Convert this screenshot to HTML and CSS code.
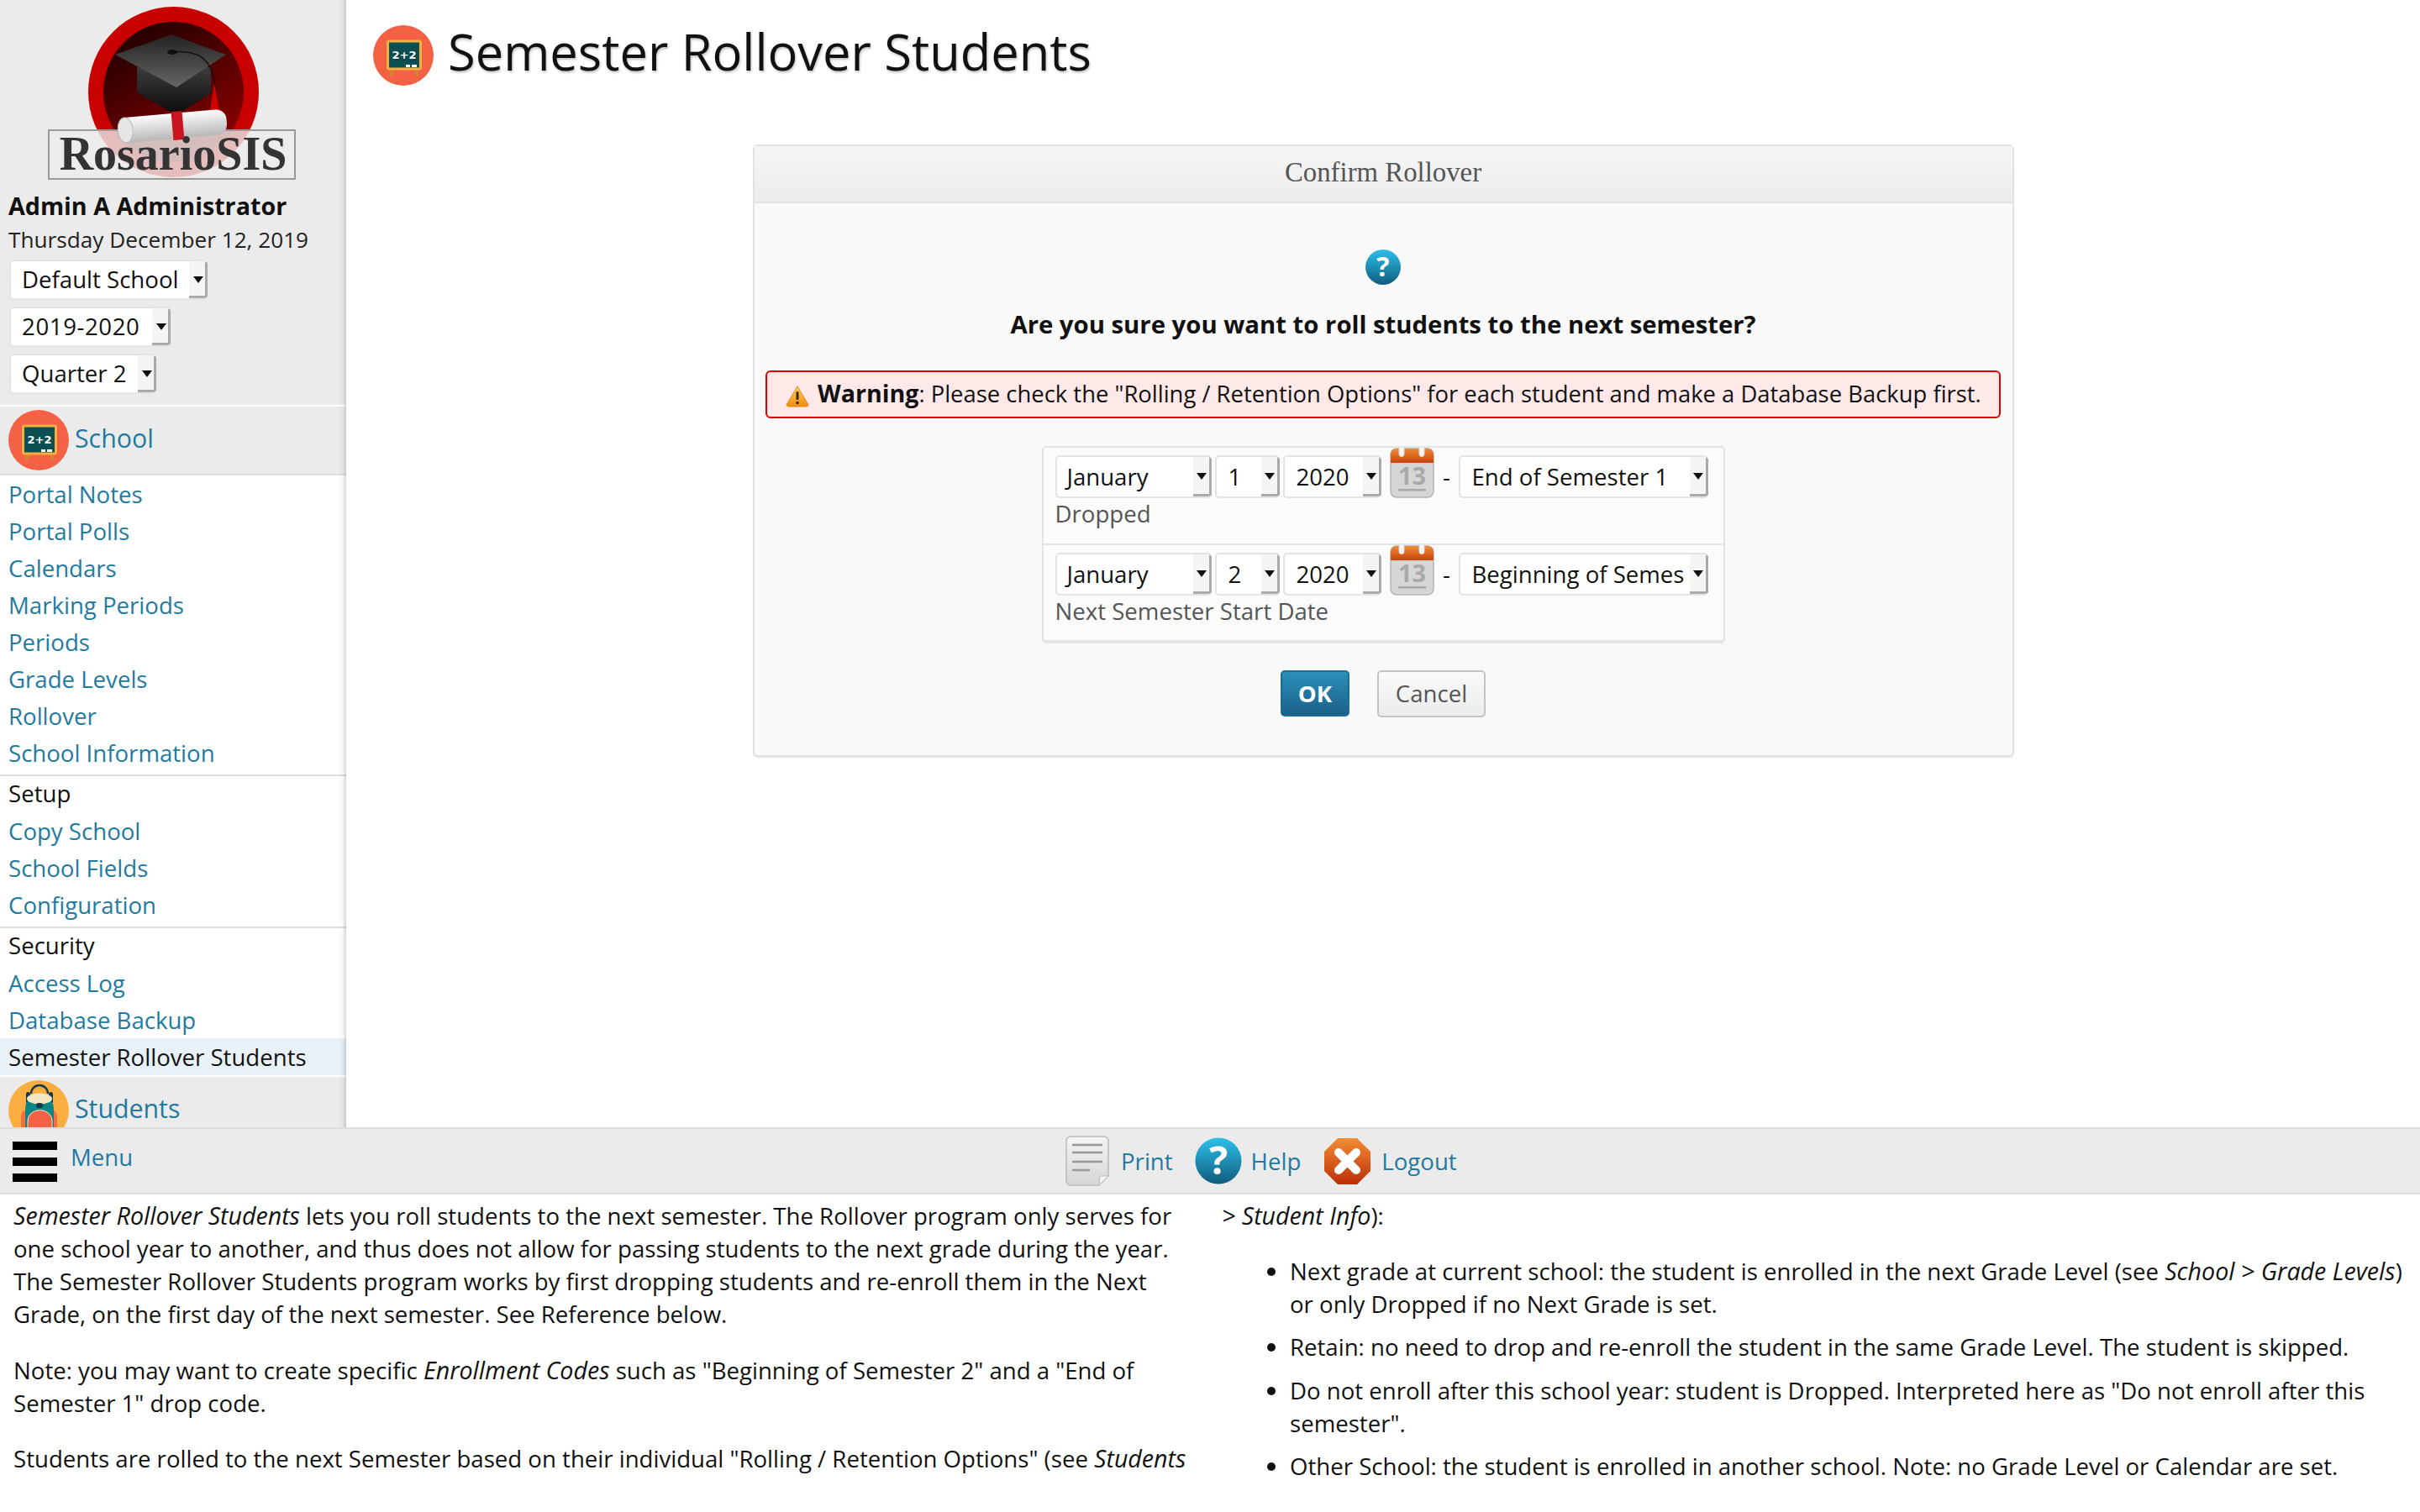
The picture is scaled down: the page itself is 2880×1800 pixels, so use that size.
FILE: index.html
```html
<!DOCTYPE html>
<html lang="en">
<head>
  <meta charset="UTF-8">
  <title>Semester Rollover Students</title>
  <link rel="stylesheet" href="styles.css">
</head>
<body>
  <svg class="defs" xmlns="http://www.w3.org/2000/svg">
    <defs>
      <linearGradient id="g-blue" x1="0" y1="0" x2="0" y2="1"><stop offset="0" stop-color="#2cc0ea"/><stop offset="1" stop-color="#105c7e"/></linearGradient>
      <linearGradient id="g-red" x1="0" y1="0" x2="0" y2="1"><stop offset="0" stop-color="#f28c33"/><stop offset="1" stop-color="#bd2f08"/></linearGradient>
      <linearGradient id="g-page" x1="0" y1="0" x2="0" y2="1"><stop offset="0" stop-color="#f5f5f5"/><stop offset="1" stop-color="#d6d6d6"/></linearGradient>
      <linearGradient id="g-warn" x1="0" y1="0" x2="0" y2="1"><stop offset="0" stop-color="#fcd26a"/><stop offset="1" stop-color="#f28a0a"/></linearGradient>
      <linearGradient id="g-inner" x1="0.2" y1="0" x2="0.8" y2="1"><stop offset="0" stop-color="#1e0000"/><stop offset="1" stop-color="#920000"/></linearGradient>
      <linearGradient id="g-cap" x1="0" y1="0" x2="0" y2="1"><stop offset="0" stop-color="#222"/><stop offset="1" stop-color="#666"/></linearGradient>
      <linearGradient id="g-capbody" x1="0" y1="0" x2="0" y2="1"><stop offset="0" stop-color="#3c3c3c"/><stop offset="1" stop-color="#0a0a0a"/></linearGradient>
      <linearGradient id="g-roll" x1="0" y1="0" x2="0" y2="1"><stop offset="0" stop-color="#fdfdfd"/><stop offset="1" stop-color="#b8b8b8"/></linearGradient>
      <linearGradient id="g-calhead" x1="0" y1="0" x2="0" y2="1"><stop offset="0" stop-color="#f08a3a"/><stop offset="1" stop-color="#c9440c"/></linearGradient>
    </defs>
    <symbol id="i-school" viewBox="0 0 72 72">
      <circle cx="36" cy="36" r="36" fill="#f56145"/>
      <path d="M24 52l-3 8M50 52l3 8" stroke="#c98c30" stroke-width="3.500" fill="none"/>
      <rect x="17.500" y="19" width="39" height="33" rx="1.500" fill="#0c4f53" stroke="#fbae40" stroke-width="3"/>
      <text x="37" y="40" class="board-text" text-anchor="middle">2+2</text>
      <rect x="39" y="47" width="5" height="3" fill="#fff"/>
      <rect x="46" y="47" width="6" height="3" fill="#fff"/>
    </symbol>
    <symbol id="i-students" viewBox="0 0 72 72">
      <circle cx="36" cy="36" r="36" fill="#fbae40"/>
      <rect x="15" y="36" width="43" height="36" rx="6" fill="#f56145" opacity=".85"/>
      <path d="M27 16a10 10 0 0 1 20 0" fill="none" stroke="#123a4a" stroke-width="2.500"/>
      <rect x="21" y="14" width="5" height="14" rx="2.500" fill="#123a4a"/>
      <rect x="48" y="14" width="5" height="14" rx="2.500" fill="#123a4a"/>
      <path d="M20 72V34c0-10 8-16 17-16s17 6 17 16v38z" fill="#0b8585"/>
      <ellipse cx="37" cy="22" rx="15" ry="6.500" fill="#f2e7c4"/>
      <rect x="33" y="27" width="8" height="6" rx="3" fill="#123a4a"/>
      <path d="M23 72V48a14 12 0 0 1 29 0v24z" fill="#f56145" stroke="#f2e7c4" stroke-width="1"/>
    </symbol>
    <symbol id="i-calendar" viewBox="0 0 53 62">
      <rect x="1" y="3" width="51" height="58" rx="7" fill="#d6d6d6" stroke="#b5b5b5" stroke-width="1.500"/>
      <path d="M1 20V10a7 7 0 0 1 7-7h37a7 7 0 0 1 7 7v10z" fill="url(#g-calhead)"/>
      <rect x="11" y="0.500" width="6" height="12" rx="3" fill="#f6f6f6" stroke="#ddd"/>
      <rect x="35" y="0.500" width="6" height="12" rx="3" fill="#f6f6f6" stroke="#ddd"/>
      <text x="26.500" y="46" class="cal-text" text-anchor="middle">13</text>
      <rect x="10" y="51" width="33" height="2.500" fill="#a8a8a8"/>
    </symbol>
  </svg>

  <div class="top">
    <aside class="side">
      <div class="logo">
        <svg class="logo-art" viewBox="0 0 412 228" width="412" height="228">
          <circle cx="206.500" cy="109.500" r="101.500" fill="#c80000"/>
          <circle cx="206.500" cy="109.500" r="83.500" fill="url(#g-inner)"/>
          <path d="M163 80v30l47 27 41-26V80z" fill="url(#g-capbody)"/>
          <path d="M204 41l65 24-59 39-73-39z" fill="url(#g-cap)"/>
          <path d="M204 62c30-3 48 6 52 40" fill="none" stroke="#111" stroke-width="1.500"/>
          <ellipse cx="205" cy="62" rx="6" ry="3" fill="#111"/>
          <path d="M255 100l-5 31h11z" fill="#d40000"/>
          <rect class="logo-box" x="58" y="155" width="293" height="58"/>
          <g transform="rotate(-5 206 150)">
            <rect x="140" y="135" width="130" height="30" rx="12" fill="url(#g-roll)"/>
            <rect x="205" y="133" width="13" height="34" fill="#c8141c"/>
            <ellipse cx="149" cy="150" rx="9" ry="15" fill="#e6e6e6" stroke="#bbb"/>
          </g>
          <text class="logo-text" x="206" y="202" text-anchor="middle">RosarioSIS</text>
        </svg>
      </div>
      <div class="user">Admin A Administrator</div>
      <div class="today">Thursday December 12, 2019</div>
      <div class="side-selects">
        <div class="pick pick-school"><span class="pick-val">Default School</span><span class="pick-arrow"></span></div>
        <div class="pick pick-year"><span class="pick-val">2019-2020</span><span class="pick-arrow"></span></div>
        <div class="pick pick-quarter"><span class="pick-val">Quarter 2</span><span class="pick-arrow"></span></div>
      </div>

      <nav class="menu">
        <a class="menu-head"><svg class="menu-ico"><use href="#i-school"/></svg><span class="menu-head-text">School</span></a>
        <div class="menu-list">
          <a class="menu-link">Portal Notes</a>
          <a class="menu-link">Portal Polls</a>
          <a class="menu-link">Calendars</a>
          <a class="menu-link">Marking Periods</a>
          <a class="menu-link">Periods</a>
          <a class="menu-link">Grade Levels</a>
          <a class="menu-link">Rollover</a>
          <a class="menu-link">School Information</a>
          <div class="menu-title">Setup</div>
          <a class="menu-link">Copy School</a>
          <a class="menu-link">School Fields</a>
          <a class="menu-link">Configuration</a>
          <div class="menu-title">Security</div>
          <a class="menu-link">Access Log</a>
          <a class="menu-link">Database Backup</a>
          <a class="menu-link menu-active">Semester Rollover Students</a>
        </div>
        <a class="menu-head"><svg class="menu-ico"><use href="#i-students"/></svg><span class="menu-head-text">Students</span></a>
      </nav>
    </aside>

    <main class="main">
      <h1 class="page-title"><svg class="title-ico"><use href="#i-school"/></svg><span class="page-title-text">Semester Rollover Students</span></h1>

      <section class="dialog">
        <header class="dialog-head">Confirm Rollover</header>
        <div class="dialog-body">
          <svg class="ask-ico" viewBox="0 0 42 42">
            <circle cx="21" cy="21" r="21" fill="url(#g-blue)"/>
            <text x="21" y="32" class="q-text" text-anchor="middle">?</text>
          </svg>
          <h4 class="ask">Are you sure you want to roll students to the next semester?</h4>
          <div class="warning">
            <svg class="warn-ico" viewBox="0 0 28 27">
              <path d="M14 2L26.500 23a2 2 0 0 1-1.500 3H3a2 2 0 0 1-1.500-3z" fill="url(#g-warn)" stroke="#ea8b10" stroke-linejoin="round"/>
              <rect x="12.500" y="8" width="3" height="10" rx="1.500" fill="#442a00"/>
              <circle cx="14" cy="21.500" r="1.800" fill="#442a00"/>
            </svg>
            <span class="warning-text"><b>Warning</b>: Please check the "Rolling / Retention Options" for each student and make a Database Backup first.</span>
          </div>

          <div class="dates">
            <div class="date-row">
              <div class="date-fields">
                <div class="pick pick-month"><span class="pick-val">January</span><span class="pick-arrow"></span></div>
                <div class="pick pick-day"><span class="pick-val">1</span><span class="pick-arrow"></span></div>
                <div class="pick pick-y"><span class="pick-val">2020</span><span class="pick-arrow"></span></div>
                <svg class="cal-ico"><use href="#i-calendar"/></svg>
                <span class="dash">-</span>
                <div class="pick pick-code"><span class="pick-val">End of Semester 1</span><span class="pick-arrow"></span></div>
              </div>
              <div class="date-label">Dropped</div>
            </div>
            <div class="date-row date-row-last">
              <div class="date-fields">
                <div class="pick pick-month"><span class="pick-val">January</span><span class="pick-arrow"></span></div>
                <div class="pick pick-day"><span class="pick-val">2</span><span class="pick-arrow"></span></div>
                <div class="pick pick-y"><span class="pick-val">2020</span><span class="pick-arrow"></span></div>
                <svg class="cal-ico"><use href="#i-calendar"/></svg>
                <span class="dash">-</span>
                <div class="pick pick-code"><span class="pick-val">Beginning of Semester 2</span><span class="pick-arrow"></span></div>
              </div>
              <div class="date-label">Next Semester Start Date</div>
            </div>
          </div>

          <div class="actions">
            <button class="btn btn-ok" type="button">OK</button>
            <button class="btn btn-cancel" type="button">Cancel</button>
          </div>
        </div>
      </section>
    </main>
  </div>

  <div class="bar">
    <a class="bar-menu">
      <span class="burger"><i></i><i></i><i></i></span>
      <span class="bar-menu-text">Menu</span>
    </a>
    <div class="tools">
      <a class="tool tool-print">
        <svg class="ico-print" viewBox="0 0 52 60">
          <path d="M6 1h40a5 5 0 0 1 5 5v42L40 59H6a5 5 0 0 1-5-5V6a5 5 0 0 1 5-5z" fill="url(#g-page)" stroke="#bbb" stroke-width="1.500"/>
          <path d="M8 11h36M8 20h36M8 31h36M8 41h21" stroke="#999" stroke-width="2.500"/>
          <path d="M41 48h10L40 59z" fill="#f4f4f4" stroke="#bbb"/>
        </svg>Print
      </a>
      <a class="tool tool-help">
        <svg class="ico-help" viewBox="0 0 56 56">
          <circle cx="28" cy="28" r="27.500" fill="url(#g-blue)"/>
          <text x="28" y="44" class="help-text" text-anchor="middle">?</text>
        </svg>Help
      </a>
      <a class="tool tool-logout">
        <svg class="ico-logout" viewBox="0 0 57 57">
          <path d="M17 1h23l16 16v23L40 56H17L1 40V17z" fill="url(#g-red)"/>
          <path d="M18 18l21 21M39 18L18 39" stroke="#fff" stroke-width="10" stroke-linecap="round"/>
        </svg>Logout
      </a>
    </div>
  </div>

  <div class="help">
    <p><i>Semester Rollover Students</i> lets you roll students to the next semester. The Rollover program only serves for one school year to another, and thus does not allow for passing students to the next grade during the year. The Semester Rollover Students program works by first dropping students and re-enroll them in the Next Grade, on the first day of the next semester. See Reference below.</p>
    <p>Note: you may want to create specific <i>Enrollment Codes</i> such as "Beginning of Semester 2" and a "End of Semester 1" drop code.</p>
    <p>Students are rolled to the next Semester based on their individual "Rolling / Retention Options" (see <i>Students &gt; Student Info</i>):</p>
    <ul>
      <li>Next grade at current school: the student is enrolled in the next Grade Level (see <i>School &gt; Grade Levels</i>) or only Dropped if no Next Grade is set.</li>
      <li>Retain: no need to drop and re-enroll the student in the same Grade Level. The student is skipped.</li>
      <li>Do not enroll after this school year: student is Dropped. Interpreted here as "Do not enroll after this semester".</li>
      <li>Other School: the student is enrolled in another school. Note: no Grade Level or Calendar are set.</li>
    </ul>
  </div>
</body>
</html>
```

FILE: styles.css
```css
html, body {
  margin: 0;
  height: 1800px;
  overflow: hidden;
  background: #fff;
}
body {
  font-family: "Open Sans", sans-serif;
  font-size: 27.6px;
  color: #111;
}
.defs {
  display: block;
  width: 0;
  height: 0;
  overflow: hidden;
}
.board-text { font: bold 13px "DejaVu Sans", sans-serif; fill: #fff; }
.cal-text { font: bold 29px "Open Sans", sans-serif; fill: #a9a9a9; }
.q-text { font: bold 32px "Open Sans", sans-serif; fill: #fff; }
.help-text { font: bold 46px "Open Sans", sans-serif; fill: #fff; }
.logo-text { font: bold 56px "Liberation Serif", serif; fill: #333; }

.top {
  display: flex;
  height: 1342px;
}

/* sidebar */
.side {
  position: relative;
  width: 412px;
  flex: none;
  background: #ebebeb;
  overflow: hidden;
}
.side::after {
  content: "";
  position: absolute;
  top: 0;
  right: 0;
  bottom: 0;
  width: 10px;
  background: linear-gradient(to right, rgba(0,0,0,0), rgba(0,0,0,.03) 60%, rgba(0,0,0,.1) 80%, rgba(0,0,0,.12) 80%);
}
.logo {
  height: 228px;
}
.logo-art {
  display: block;
}
.logo-box {
  fill: rgba(236, 236, 236, .8);
  stroke: #999;
  stroke-width: 2;
}
.user {
  font-size: 28.7px;
  font-weight: bold;
  line-height: 34px;
  padding-left: 10px;
}
.today {
  font-size: 26.2px;
  line-height: 40px;
  margin-top: 3px;
  padding-left: 10px;
  color: #222;
}
.side-selects {
  display: flex;
  flex-direction: column;
  align-items: flex-start;
  gap: 8px;
  margin-top: 4px;
  padding: 0 0 13px 11px;
  border-bottom: 2px solid #fff;
}

.pick {
  display: flex;
  box-sizing: border-box;
  height: 48px;
  background: #fff;
  border: 2px solid #e4e4e4;
  border-right: 0;
  border-radius: 5px;
  color: #111;
  overflow: hidden;
}
.pick-val {
  flex: 1;
  min-width: 0;
  padding-left: 13px;
  line-height: 43px;
  white-space: nowrap;
  overflow: hidden;
}
.pick-arrow {
  position: relative;
  flex: none;
  box-sizing: border-box;
  width: 22px;
  background: #f5f5f3;
  border-right: 3px solid #aaa;
  border-bottom: 3px solid #aaa;
}
.pick-arrow::after {
  content: "";
  position: absolute;
  left: 5px;
  top: 18px;
  border: 6px solid transparent;
  border-top: 8px solid #111;
  border-bottom: 0;
}
.pick-school { width: 236px; }
.pick-year { width: 192px; }
.pick-year .pick-val { letter-spacing: .6px; }
.pick-quarter { width: 175px; }

.menu-head {
  display: flex;
  align-items: center;
  height: 80px;
  color: #227aa0;
  padding-left: 10px;
  gap: 7px;
  font-size: 30.3px;
}
.menu-head-text {
  margin-bottom: 5px;
}
.menu-ico {
  width: 72px;
  height: 72px;
  flex: none;
}
.menu-list {
  background: #fff;
  border-top: 2px solid #ddd;
}
.menu-link {
  display: block;
  height: 44px;
  line-height: 44px;
  padding-left: 10px;
  color: #227aa0;
}
.menu-title {
  height: 43px;
  line-height: 40px;
  padding-left: 10px;
  margin-top: 4px;
  border-top: 2px solid #ddd;
  color: #111;
}
.menu-active {
  background: #e8f1f8;
  color: #111;
  border-bottom: 2px solid #fff;
}

/* main column */
.main {
  flex: 1;
  min-width: 0;
}
.page-title {
  display: flex;
  align-items: center;
  gap: 17px;
  margin: 0;
  padding: 30px 0 0 32px;
  height: 72px;
  font-size: 59.6px;
  font-weight: normal;
  line-height: 62px;
  color: #111;
  text-shadow: 1px 2px 3px rgba(0,0,0,.25);
}
.page-title-text {
  margin-bottom: 10px;
}
.title-ico {
  width: 72px;
  height: 72px;
  flex: none;
}
.dialog {
  width: 1501px;
  box-sizing: border-box;
  margin: 70px auto 0;
  border: 2px solid #e2e2e2;
  border-bottom-width: 3px;
  border-radius: 6px;
  background: #f9f9f9;
}
.dialog-head {
  height: 66px;
  line-height: 62px;
  text-align: center;
  font-family: "Liberation Serif", serif;
  font-size: 32.8px;
  color: #555;
  background: linear-gradient(#f6f6f6, #ececec);
  border-bottom: 2px solid #e2e2e2;
}
.dialog-body {
  display: flex;
  flex-direction: column;
  align-items: center;
  padding: 55px 0 45px;
}
.ask-ico {
  width: 42px;
  height: 42px;
}
.ask {
  margin: 29px 0 0;
  font-size: 29.3px;
  line-height: 36px;
  font-weight: bold;
}
.warning {
  display: flex;
  align-items: center;
  gap: 10px;
  box-sizing: border-box;
  width: 1470px;
  height: 57px;
  margin-top: 37px;
  padding-left: 22px;
  background: #ffe8e8;
  border: 2px solid #d00;
  border-radius: 6px;
  white-space: nowrap;
  font-size: 27.43px;
}
.warning-text {
  margin-bottom: 5px;
}
.warning b {
  font-size: 28.6px;
}
.warn-ico {
  width: 28px;
  height: 27px;
  flex: none;
  margin-top: 3px;
}
.dates {
  box-sizing: border-box;
  width: 813px;
  margin-top: 33px;
  border: 2px solid #e4e4e4;
  border-bottom-width: 4px;
  border-radius: 5px;
  background: #fbfbfb;
}
.date-row {
  padding: 9px 14px 18px;
  border-bottom: 2px solid #e4e4e4;
}
.date-row-last {
  padding: 9px 14px 17px;
  border-bottom: 0;
}
.date-fields {
  display: flex;
  align-items: flex-end;
}
.date-fields .pick {
  height: 51px;
  margin-right: 4px;
}
.date-fields .pick-val {
  line-height: 47px;
  padding-left: 12px;
}
.date-fields .pick-arrow::after { top: 19px; left: 4px; }
.pick-month { width: 186px; }
.pick-day { width: 77px; }
.pick-day .pick-val { padding-left: 14px; }
.pick-y { width: 117px; }
.pick-y .pick-val { padding-left: 14px; }
.date-fields .pick-code { width: 297px; margin-right: 0; }
.date-fields .pick-code .pick-val { padding-left: 14px; margin-right: 7px; }
.cal-ico {
  width: 53px;
  height: 62px;
  margin: -11px 0 0 6px;
  flex: none;
}
.dash {
  width: 29px;
  padding-left: 1px;
  box-sizing: border-box;
  text-align: center;
  line-height: 51px;
}
.date-label {
  line-height: 36px;
  color: #555;
}
.actions {
  display: flex;
  align-items: flex-start;
  gap: 33px;
  margin-top: 32px;
}
.btn {
  box-sizing: border-box;
  height: 56px;
  padding: 0 0 2px;
  font-family: "Open Sans", sans-serif;
  font-size: 27.6px;
  border-radius: 5px;
}
.btn-ok {
  width: 82px;
  height: 55px;
  font-weight: bold;
  color: #fff;
  background: linear-gradient(#2a90bb, #1b5f87);
  border: 2px solid #1c6d92;
}
.btn-cancel {
  width: 129px;
  color: #555;
  background: linear-gradient(#fafafa, #ececec);
  border: 2px solid #c4c4c4;
}

/* bottom bar */
.bar {
  display: flex;
  box-sizing: border-box;
  height: 80px;
  background: #ebebeb;
  border-top: 2px solid #ddd;
  border-bottom: 2px solid #ddd;
  color: #227aa0;
}
.bar-menu {
  display: flex;
  align-items: flex-start;
  width: 152px;
  flex: none;
  padding: 15px 0 0 15px;
  box-sizing: border-box;
  gap: 16px;
}
.burger {
  display: flex;
  flex-direction: column;
  gap: 9px;
  width: 53px;
  flex: none;
}
.burger i {
  display: block;
  height: 10px;
  background: #000;
}
.bar-menu-text {
  line-height: 40px;
  margin-top: -2px;
}
.tools {
  display: flex;
  align-items: center;
  margin-left: 1116px;
}
.tool {
  display: flex;
  align-items: center;
  gap: 14px;
  line-height: 40px;
}
.tool-help { margin-left: 26px; gap: 11px; }
.tool-logout { margin-left: 27px; gap: 12px; }
.ico-print { width: 52px; height: 60px; }
.ico-help { width: 56px; height: 56px; }
.ico-logout { width: 57px; height: 57px; }

/* help text under the bar */
.help {
  height: 342px;
  padding: 4.500px 16px 0;
  line-height: 39.3px;
  column-count: 2;
  column-gap: 28px;
  column-fill: auto;
  orphans: 1;
  widows: 1;
  color: #111;
}
.help i {
  font-size: 28.6px;
}
.help p {
  margin: 0 0 26px;
}
.help ul {
  margin: 0;
  padding: 0 0 0 81px;
}
.help li {
  margin-bottom: 12px;
}
```
